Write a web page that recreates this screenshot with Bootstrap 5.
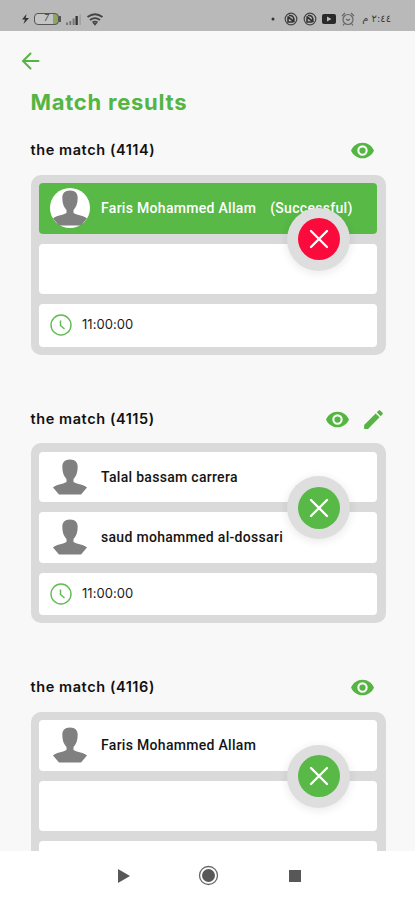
<!DOCTYPE html>
<html lang="en">
<head>
<meta charset="utf-8">
<meta name="viewport" content="width=device-width, initial-scale=1">
<title>Match results</title>
<link href="https://cdn.jsdelivr.net/npm/bootstrap@5.3.0/dist/css/bootstrap.min.css" rel="stylesheet">
<style>
:root{--leaf:#54b543}
body{font-family:Inter,"Open Sans",sans-serif;color:#141414;background:#f8f8f8}
svg{display:block;flex:none}
.phone{height:900px}
.statusbar{height:31px;background:#b9b9b9;padding:8px 24px 0 21px;color:#3c3c3c}
.status-group{height:22px}
.battery{width:25px;height:12px;border:1.6px solid #555;border-radius:4px;font:italic 9px/9px Roboto,sans-serif;background:linear-gradient(90deg,#c4c4c4 80%,#8fa660 80%)}
.status-icons{gap:5px}
.clock-text{font:10px/20px "DejaVu Sans",sans-serif;width:30px;white-space:nowrap;margin-left:1px}
.page-body{padding:20px 29.5px 0 30.5px}
.back{margin-left:-10px;height:20px}
.page-title{font-size:22px;line-height:30px;font-weight:700;color:var(--leaf);margin:16px 0 22px;letter-spacing:.75px}
.match{margin-bottom:53px}
.match-head{height:24px;margin-bottom:11.5px;padding-right:11px;gap:11px}
.match-head svg{margin-top:-1px}
.match-title{font-size:14.5px;font-weight:600;line-height:22px;letter-spacing:.58px;color:#111;margin:-2px 0 0}
.board{height:180px;background:#dadada;border-radius:10px;padding:8.5px;gap:10px}
.slot{height:50.5px;background:#fff;border-radius:4px;padding-left:11px;font:500 14px/20px Roboto,sans-serif;flex:none;white-space:nowrap}
.slot.time{height:42.5px;font:400 13px/20px Inter,sans-serif;color:#222}
.slot.won{background:#58b947;color:#fff}
.slot .who{margin-left:11px;letter-spacing:.3px}
.slot .outcome{margin-left:14px;letter-spacing:.3px}
.slot.time .who{margin-left:10px;margin-top:-2px;letter-spacing:.05px}
.versus{width:63px;height:63px;right:35.5px;top:33px;background:#dedede;box-shadow:0 2px 8px 1px rgba(0,0,0,.08)}
.disc{width:42px;height:42px;background:#58b947}
.disc.lost{background:#fb0b3b}
.navkeys{height:49px;background:#fff}
.navkeys svg{width:415px;height:49px}
</style>
</head>
<body>
<svg width="0" height="0" class="position-absolute">
<defs>
<symbol id="eye" viewBox="0 0 24 24"><path fill="#54b543" d="M12 4.500C7 4.500 2.730 7.610 1 12c1.730 4.390 6 7.500 11 7.500s9.270-3.110 11-7.500c-1.730-4.390-6-7.500-11-7.500zM12 17a5 5 0 1 1 0-10 5 5 0 0 1 0 10zm0-8a3 3 0 1 0 0 6 3 3 0 0 0 0-6z"/></symbol>
<symbol id="pencil" viewBox="0 0 24 24"><path fill="#54b543" d="M3 17.250V21h3.750L17.810 9.940l-3.750-3.750L3 17.250zM20.710 7.040a1 1 0 0 0 0-1.410l-2.340-2.340a1 1 0 0 0-1.410 0l-1.830 1.830 3.750 3.750 1.830-1.830z"/></symbol>
<symbol id="person" viewBox="0 0 40 40"><circle cx="20" cy="20" r="20" fill="#fff"/><path fill="#808080" d="M20 2.500C14.500 2.500 12.300 5.500 12.300 10c0 5.500 1.700 9.500 4.200 12v3c-4 2.200-10.500 2.700-13.500 5.500l6 7h22l6-7c-3-2.800-9.500-3.300-13.500-5.500v-3c2.500-2.500 4.200-6.500 4.200-12 0-4.500-2.200-7.500-7.700-7.500z"/></symbol>
<symbol id="clock" viewBox="0 0 22 22"><circle cx="11" cy="11" r="10" fill="none" stroke="#62bb54" stroke-width="1.400"/><path d="M10.500 6.500v5l4 3.500" fill="none" stroke="#62bb54" stroke-width="1.500"/></symbol>
<symbol id="cross" viewBox="0 0 20 20"><path d="M2 2l16 16M18 2L2 18" stroke="#fff" stroke-width="2.300" stroke-linecap="round"/></symbol>
<symbol id="muted" viewBox="0 0 14 14"><circle cx="7" cy="7" r="5.800" fill="none" stroke="#444" stroke-width="1.200"/><path d="M3.500 4.500l7 5.500M5 3.500q5-.5 5 5M4 6v4h5" fill="none" stroke="#333" stroke-width="1.600"/></symbol>
</defs>
</svg>
<div class="phone d-flex flex-column overflow-hidden">
<header class="statusbar d-flex justify-content-between flex-shrink-0">
<div class="status-group d-flex align-items-center">
<svg width="9" height="12" viewBox="0 0 9 12"><path d="M5.500 1L1 6.500h3L2.500 11 8 5H4.700z" fill="#333"/></svg>
<div class="battery ms-1 text-center">7</div>
<svg width="2" height="6"><path d="M0 0h2v6H0z" fill="#555"/></svg>
<svg class="ms-1" width="17" height="13" viewBox="0 0 17 13"><path d="M1 12V9.500h2V12zM4.300 12V8h2v4zM7.600 12V5.500h2V12z" fill="#777"/><path d="M10.500 12V3h2.300v9z" fill="#333"/><path d="M14.500 12V1.500h1.200V12z" fill="#999"/></svg>
<svg class="ms-1" width="18" height="13" viewBox="0 0 18 13"><path d="M1.500 4q7.500-5.500 15 0M4 7q5-3.700 10 0M6.500 9.500q2.500-1.800 5 0" fill="none" stroke="#444" stroke-width="1.800"/><path d="M6.800 10h4.400L9 12.700z" fill="#444"/></svg>
</div>
<div class="status-group status-icons d-flex align-items-center">
<svg class="me-1" width="4" height="4"><circle cx="2" cy="2" r="1.500" fill="#333"/></svg>
<svg width="14" height="14"><use href="#muted"/></svg>
<svg width="14" height="14"><use href="#muted"/></svg>
<svg width="14" height="12" viewBox="0 0 14 12"><rect y="1" width="14" height="10" rx="2" fill="#292929"/><path d="M5 3.500v5L9.500 6z" fill="#bbb"/></svg>
<svg width="14" height="14" viewBox="0 0 14 14"><g fill="none" stroke="#666" stroke-width="1.200"><circle cx="7" cy="7.500" r="5"/><path d="M1 4l3-3M13 4l-3-3M5 7l2 1.500L9 7M3.500 11.500L2 13.500M10.500 11.500l1.500 2"/></g></svg>
<span class="clock-text" dir="rtl" lang="ar">٢:٤٤ م</span>
</div>
</header>
<main class="page-body flex-fill overflow-hidden">
<div class="back"><svg width="20" height="20" viewBox="0 0 20 20"><path d="M17.500 10H2M9.500 2.500L2 10l7.500 7.500" fill="none" stroke="#54b543" stroke-width="2" stroke-linecap="round"/></svg></div>
<h1 class="page-title">Match results</h1>

<section class="match">
<div class="match-head d-flex align-items-center"><h2 class="match-title me-auto">the match (4114)</h2><svg width="25" height="25"><use href="#eye"/></svg></div>
<div class="board d-flex flex-column position-relative">
<div class="slot won d-flex align-items-center"><svg width="40" height="40"><use href="#person"/></svg><span class="who">Faris Mohammed Allam</span><span class="outcome">(Successful)</span></div>
<div class="slot"></div>
<div class="slot time d-flex align-items-center"><svg width="22" height="22"><use href="#clock"/></svg><span class="who">11:00:00</span></div>
<div class="versus position-absolute rounded-circle d-flex align-items-center justify-content-center"><div class="disc lost rounded-circle d-flex align-items-center justify-content-center"><svg width="20" height="20"><use href="#cross"/></svg></div></div>
</div>
</section>

<section class="match">
<div class="match-head d-flex align-items-center pe-0"><h2 class="match-title me-auto">the match (4115)</h2><svg width="25" height="25"><use href="#eye"/></svg><svg width="25" height="25"><use href="#pencil"/></svg></div>
<div class="board d-flex flex-column position-relative">
<div class="slot d-flex align-items-center"><svg width="40" height="40"><use href="#person"/></svg><span class="who">Talal bassam carrera</span></div>
<div class="slot d-flex align-items-center"><svg width="40" height="40"><use href="#person"/></svg><span class="who">saud mohammed al-dossari</span></div>
<div class="slot time d-flex align-items-center"><svg width="22" height="22"><use href="#clock"/></svg><span class="who">11:00:00</span></div>
<div class="versus position-absolute rounded-circle d-flex align-items-center justify-content-center"><div class="disc rounded-circle d-flex align-items-center justify-content-center"><svg width="20" height="20"><use href="#cross"/></svg></div></div>
</div>
</section>

<section class="match">
<div class="match-head d-flex align-items-center"><h2 class="match-title me-auto">the match (4116)</h2><svg width="25" height="25"><use href="#eye"/></svg></div>
<div class="board d-flex flex-column position-relative">
<div class="slot d-flex align-items-center"><svg width="40" height="40"><use href="#person"/></svg><span class="who">Faris Mohammed Allam</span></div>
<div class="slot"></div>
<div class="slot time"></div>
<div class="versus position-absolute rounded-circle d-flex align-items-center justify-content-center"><div class="disc rounded-circle d-flex align-items-center justify-content-center"><svg width="20" height="20"><use href="#cross"/></svg></div></div>
</div>
</section>
</main>
<footer class="navkeys flex-shrink-0"><svg viewBox="0 0 415 49"><path d="M118 18v14l12-7z" fill="#585858"/><circle cx="208.500" cy="24.500" r="9" fill="none" stroke="#666" stroke-width="1.300"/><circle cx="208.500" cy="24.500" r="6.500" fill="#585858"/><path d="M289 19h12v12h-12z" fill="#585858"/></svg></footer>
</div>
<script src="https://cdn.jsdelivr.net/npm/bootstrap@5.3.0/dist/js/bootstrap.bundle.min.js"></script>
</body>
</html>
